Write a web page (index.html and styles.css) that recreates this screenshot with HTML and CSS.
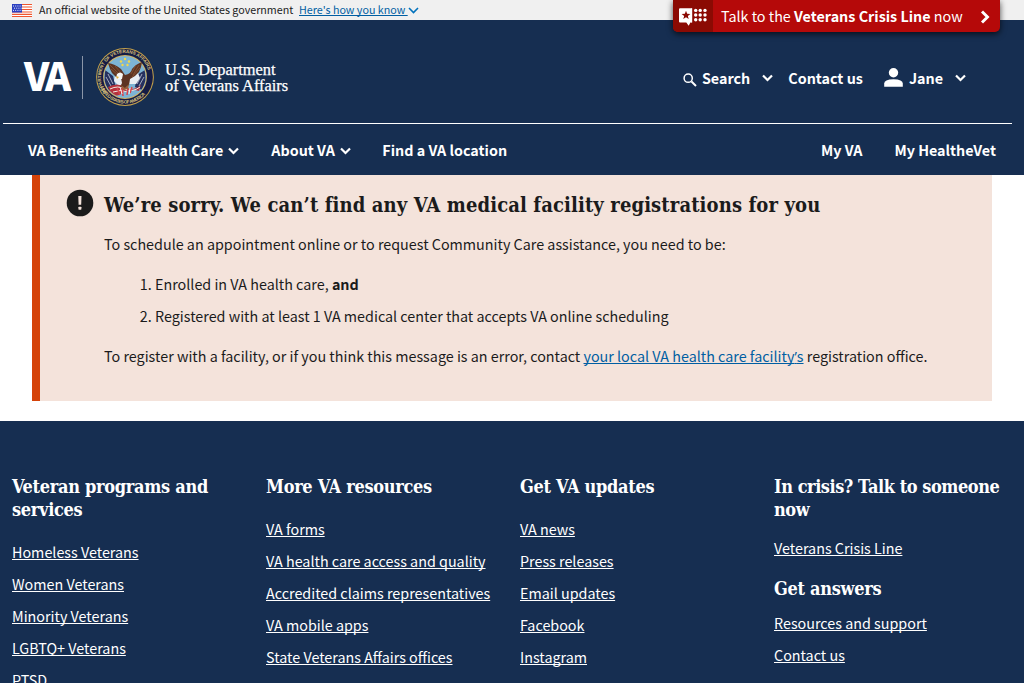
FILE: index.html
```
<!DOCTYPE html>
<html lang="en">
<head>
<meta charset="utf-8">
<title>VA online scheduling | Veterans Affairs</title>
<link rel="stylesheet" href="styles.css">
</head>
<body>
<div class="gov-banner">
  <svg class="flag" width="20" height="13" viewBox="0 0 20 13"><rect width="20" height="13" fill="#fff"/><path d="M0 .5H20M0 3H20M0 5.500H20M0 8H20M0 10.300H20M0 12.500H20" stroke="#f0562f" stroke-width="1.200"/><rect width="10" height="8.500" fill="#2b3fc0"/><path d="M1 2H10M2 4.200H10M1 6.400H10" stroke="#fff" stroke-width=".9" stroke-dasharray="1 1.200"/></svg>
  <span class="gov-text">An official website of the United States government</span>
  <a class="gov-link" href="#">Here's how you know&nbsp;</a>
  <svg class="gov-chev" width="11" height="7" viewBox="0 0 11 7"><path d="M1 1L5.500 5.500L10 1" fill="none" stroke="#0071bc" stroke-width="1.600"/></svg>
</div>
<a class="crisis" href="#">
  <span class="crisis-icon"><svg width="30" height="20" viewBox="0 0 30 20"><path d="M2 1.300h11.600v14.200h-1.200L10.700 18.700 8.300 15.500H2q-1 0-1-1V2.300q0-1 1-1z" fill="#fff"/><path d="M8 3.800l1.150 3 3.200.15-2.500 2 .85 3.100L8 10.300l-2.700 1.750.85-3.100-2.500-2 3.200-.15z" fill="#8b0a03"/><path d="M13 1.300h1.200V15.500H13z" fill="#fff"/><g fill="#fff"><circle cx="17.700" cy="3.400" r="1.700"/><circle cx="22.200" cy="3.400" r="1.700"/><circle cx="27" cy="3.400" r="1.700"/><circle cx="17.700" cy="8" r="1.700"/><circle cx="22.200" cy="8" r="1.700"/><circle cx="27" cy="8" r="1.700"/><circle cx="17.700" cy="12.700" r="1.700"/><circle cx="22.200" cy="12.700" r="1.700"/><circle cx="27" cy="12.700" r="1.700"/></g></svg></span>
  <span class="crisis-text">Talk to the <b>Veterans Crisis Line</b> now</span>
  <svg class="crisis-arrow" width="10" height="14" viewBox="0 0 10 14"><path d="M2 1.500L7.500 7 2 12.500" fill="none" stroke="#fff" stroke-width="2.900"/></svg>
</a>
<header class="header">
  <div class="header-top">
    <div class="logo">
      <span class="logo-va">VA</span>
      <span class="logo-rule"></span>
      <svg class="seal" width="60" height="60" viewBox="-30 -30 60 60">
        <defs><path id="arcTop" d="M-18.500 15.500A24.100 24.100 0 1 1 18.500 15.500"/><path id="arcBottom" d="M-26.200 4.500A26.600 26.600 0 0 0 26.200 4.500"/><clipPath id="disc"><circle r="20.600"/></clipPath></defs>
        <circle r="28.900" fill="#c5a14a"/><circle r="27.900" fill="#151c45"/><circle r="21.900" fill="#d0b468"/><circle r="20.900" fill="#7db4d5"/>
        <g class="seal-text"><text><textPath href="#arcTop" textLength="85">DEPARTMENT OF VETERANS AFFAIRS</textPath></text><text><textPath href="#arcBottom" startOffset="6" textLength="54">UNITED STATES OF AMERICA</textPath></text></g>
        <g clip-path="url(#disc)">
          <path d="M-20-7L-12-1-9 11-16 14-21 5zM20-7L12-2 10 10 17 13 21 4z" fill="#26305f"/>
          <path d="M-17-3L-12 7M-19 0L-14 9M17-3L12 7M19 0L14 9" stroke="#dce1e8" stroke-width=".7"/>
          <path d="M-10-2L-5-2-1 7-6 9-11 4zM5-2L13-4 15 1 11 7 4 7z" fill="#e9eef4"/>
          <path d="M-17 10Q-8 5 0 10T16 8L14 14Q4 10-3 16T-14 16z" fill="#b5323c"/>
          <path d="M-15 12Q-7 8 0 12T15 10M-12 15Q-4 12 3 15" fill="none" stroke="#f1e5df" stroke-width="1"/>
          <path d="M-8 11L-5 18M-3 11L-2 19M3 11L2 18M7 10L5 16" stroke="#d9424a" stroke-width="1.500"/>
          <path d="M-5 10L-3 17M5 11L4 17" stroke="#f7f4ef" stroke-width="1"/>
        </g>
        <path d="M-17-14Q-10-13-4-8L0-2Q6-3 7-8 11-13 17-15L16-10 14-5 10-1 5 2 4 8 0 11-5 10-3 6-4 1-9 0-13-4-15-8z" fill="#5c3423"/>
        <path d="M-15-12L-6-3M-14-8L-6-1M14-12L8-2M15-9L7 0M11-12L6-3M-10-11L-4-4" stroke="#8c5633" stroke-width=".8"/>
        <path d="M-8-3Q-5-6-2-3L-3 2-6 2-9 1z" fill="#f7f6f2"/><path d="M-9-1L-6 0-8 2z" fill="#e0aa36"/>
        <path d="M-4 8L0 11 4 7 3 12-2 13z" fill="#98613a"/>
        <g fill="#f3d84a"><circle cx="0" cy="-18" r="1.200"/><circle cx="-4" cy="-15.500" r="1.200"/><circle cx="4" cy="-15.500" r="1.200"/><circle cx="-2.500" cy="-12" r="1.200"/><circle cx="2.500" cy="-12" r="1.200"/></g>
      </svg>
      <span class="logo-name">U.S. Department<br>of Veterans Affairs</span>
    </div>
    <div class="tools">
      <svg class="search-icon" width="14" height="14" viewBox="0 0 14 14"><circle cx="5.200" cy="5.200" r="4.100" fill="none" stroke="#fff" stroke-width="1.500"/><path d="M8.500 8.500L13 13" stroke="#fff" stroke-width="1.900"/></svg>
      <span>Search</span>
      <svg class="chev search-chev" width="11" height="8" viewBox="0 0 11 8"><path d="M1 1.500L5.500 6 10 1.500" fill="none" stroke="#fff" stroke-width="2.200"/></svg>
      <span class="contact">Contact us</span>
      <svg class="user-icon" width="19" height="19" viewBox="0 0 19 19"><circle cx="9.500" cy="4.800" r="4.700" fill="#fff"/><path d="M.2 18.700V15.500Q.2 11.500 9.500 11.300 18.800 11.500 18.800 15.500V18.700z" fill="#fff"/></svg>
      <span>Jane</span>
      <svg class="chev user-chev" width="11" height="8" viewBox="0 0 11 8"><path d="M1 1.500L5.500 6 10 1.500" fill="none" stroke="#fff" stroke-width="2.200"/></svg>
    </div>
  </div>
  <nav class="nav">
    <a href="#">VA Benefits and Health Care</a>
    <svg class="chev nav-chev" width="11" height="8" viewBox="0 0 11 8"><path d="M1 1.500L5.500 6 10 1.500" fill="none" stroke="#fff" stroke-width="2.200"/></svg>
    <a class="nav-about" href="#">About VA</a>
    <svg class="chev nav-chev" width="11" height="8" viewBox="0 0 11 8"><path d="M1 1.500L5.500 6 10 1.500" fill="none" stroke="#fff" stroke-width="2.200"/></svg>
    <a class="nav-find" href="#">Find a VA location</a>
    <a class="nav-my" href="#">My VA</a>
    <a href="#">My HealtheVet</a>
  </nav>
</header>
<main class="alert">
  <svg class="alert-icon" width="28" height="28" viewBox="0 0 28 28"><circle cx="14" cy="14" r="13.300" fill="#1b1b1b"/><path d="M12.300 7h3.200l-.3 8.700h-2.600z" fill="#f4e3db"/><rect x="12.400" y="17.700" width="3" height="3" rx=".6" fill="#f4e3db"/></svg>
  <div>
    <h1>We’re sorry. We can’t find any VA medical facility registrations for you</h1>
    <p>To schedule an appointment online or to request Community Care assistance, you need to be:</p>
    <ol>
      <li>Enrolled in VA health care, <b>and</b></li>
      <li>Registered with at least 1 VA medical center that accepts VA online scheduling</li>
    </ol>
    <p>To register with a facility, or if you think this message is an error, contact <a href="#">your local VA health care facility<span class="apos">’</span>s</a> registration office.</p>
  </div>
</main>
<footer class="footer">
  <section>
    <h2>Veteran programs and services</h2>
    <ul>
      <li><a href="#">Homeless Veterans</a></li>
      <li><a href="#">Women Veterans</a></li>
      <li><a href="#">Minority Veterans</a></li>
      <li><a href="#">LGBTQ+ Veterans</a></li>
      <li><a href="#">PTSD</a></li>
    </ul>
  </section>
  <section>
    <h2>More VA resources</h2>
    <ul>
      <li><a href="#">VA forms</a></li>
      <li><a href="#">VA health care access and quality</a></li>
      <li><a href="#">Accredited claims representatives</a></li>
      <li><a href="#">VA mobile apps</a></li>
      <li><a href="#">State Veterans Affairs offices</a></li>
    </ul>
  </section>
  <section>
    <h2>Get VA updates</h2>
    <ul>
      <li><a href="#">VA news</a></li>
      <li><a href="#">Press releases</a></li>
      <li><a href="#">Email updates</a></li>
      <li><a href="#">Facebook</a></li>
      <li><a href="#">Instagram</a></li>
    </ul>
  </section>
  <section class="help">
    <h2 class="tight">In crisis? Talk to someone<br>now</h2>
    <ul><li><a href="#">Veterans Crisis Line</a></li></ul>
    <h2>Get answers</h2>
    <ul>
      <li><a href="#">Resources and support</a></li>
      <li><a href="#">Contact us</a></li>
    </ul>
  </section>
</footer>
</body>
</html>
```
FILE: styles.css
```
* { box-sizing: border-box; }
body {
  margin: 0;
  height: 683px;
  overflow: hidden;
  background: #fff;
  color: #1b1b1b;
  font: 14.33px/24px "Noto Sans CJK SC", "Open Sans", sans-serif;
}
svg { display: block; flex: none; }
a { text-decoration-thickness: 1px; text-underline-offset: 1px; text-decoration-skip-ink: none; }

.gov-banner {
  display: flex;
  height: 20px;
  padding-left: 12px;
  background: #f0f0f0;
  font-size: 10.73px;
  line-height: 19px;
  white-space: nowrap;
}
.flag { margin: 4px 7px 0 0; }
.gov-text { width: 260px; }
.gov-link { color: #005ea2; }
.gov-chev { margin-top: 7px; }

.crisis {
  position: absolute;
  top: 0;
  left: 673px;
  display: flex;
  width: 327px;
  height: 32px;
  overflow: hidden;
  border-radius: 0 0 5px 5px;
  background: #b50909;
  box-shadow: 0 2px 6px rgba(0, 0, 0, .7);
  color: #fff;
  line-height: 32px;
  text-decoration: none;
  white-space: nowrap;
}
.crisis-icon { width: 40px; padding: 7px 0 0 5px; background: #8b0a03; }
.crisis-text { flex: 1; padding-left: 8px; }
.crisis-arrow { margin: 10px 10px 0 0; }

.header { height: 155px; background: #162e51; color: #fff; font-weight: 700; }
.header-top {
  display: flex;
  justify-content: space-between;
  height: 104px;
  margin: 0 12px 0 3px;
  border-bottom: 1px solid #fff;
}
.logo { display: flex; padding-left: 21px; }
.logo-va {
  width: 58px;
  margin-top: 28px;
  font-size: 39.5px;
  font-weight: 900;
  line-height: 52px;
  letter-spacing: -3.5px;
}
.logo-rule { width: 1px; height: 43px; margin: 36px 12px 0 0; background: #8b96a8; }
.seal { margin-top: 27px; }
.seal-text { font: 700 4.6px "Liberation Sans", sans-serif; fill: #d9c27c; }
.logo-name {
  margin: 42px 0 0 10px;
  font: 400 16.4px/16px "Liberation Serif", serif;
  -webkit-text-stroke: .25px #fff;
  white-space: nowrap;
}
.tools { display: flex; height: 24px; margin-top: 46px; padding-right: 46px; white-space: nowrap; }
.search-icon { margin: 7px 5px 0 0; }
.chev { margin-top: 8px; }
.search-chev { margin-left: 12px; margin-right: 15px; }
.user-icon { margin: 2px 6px 0 21px; }
.user-chev { margin-left: 12px; }

.nav { display: flex; padding: 14px 28px 0; white-space: nowrap; }
.nav a { color: #fff; text-decoration: none; }
.nav .chev { margin-top: 9px; }
.nav-chev { margin-left: 5px; }
.nav-about { margin-left: 32px; }
.nav-find { margin-left: 31.5px; }
.nav-my { margin: 0 32px 0 auto; }

.alert {
  display: flex;
  height: 226px;
  margin: 0 32px 20px;
  padding: 0 0 0 26px;
  border-left: 8px solid #d54309;
  background: #f4e3db;
}
.alert-icon { margin: 14px 10px 0 0; }
.alert h1 {
  margin: 16px 0 13px;
  font: 700 20px/28px "DejaVu Serif Condensed", "DejaVu Serif", serif;
  letter-spacing: .12px;
  white-space: nowrap;
}
.alert p { margin: 0; white-space: nowrap; }
.alert a { color: #005ea2; }
.apos { font-family: "Open Sans", sans-serif; line-height: 1; }
.alert ol { margin: 16px 0; padding-left: 51px; }
.alert li + li { margin-top: 8px; }

.footer {
  display: grid;
  grid-template-columns: repeat(4, 230px);
  column-gap: 24px;
  height: 262px;
  padding: 54px 12px 0;
  overflow: hidden;
  background: #162e51;
  color: #fff;
}
.footer h2 {
  margin: 0;
  font: 700 18px/23px "DejaVu Serif Condensed", "DejaVu Serif", serif;
  letter-spacing: -.3px;
}
.footer .tight { letter-spacing: -.45px; white-space: nowrap; }
.footer ul { margin: 19px 0 0; padding: 0; list-style: none; }
.footer li { height: 24px; margin-bottom: 8px; white-space: nowrap; }
.footer a { color: #fff; }
.footer .help ul { margin-top: 15px; }
.footer .help ul + h2 { margin-top: 17px; }
.footer .help h2 + ul:last-child { margin-top: 11px; }
```
